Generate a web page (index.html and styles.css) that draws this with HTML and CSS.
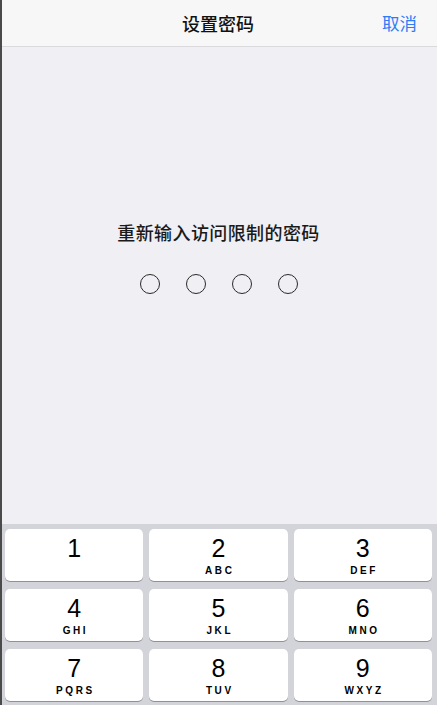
FILE: index.html
```html
<!DOCTYPE html>
<html>
<head>
<meta charset="utf-8">
<link rel="stylesheet" href="styles.css">
</head>
<body>
<div class="screen">
  <header class="navbar">
    <div class="title">设置密码</div>
    <div class="cancel">取消</div>
  </header>
  <main class="content">
    <div class="prompt">重新输入访问限制的密码</div>
    <div class="dots">
      <span class="dot"></span><span class="dot"></span><span class="dot"></span><span class="dot"></span>
    </div>
  </main>
  <section class="keyboard">
    <div class="key"><span class="num">1</span><span class="letters"></span></div>
    <div class="key"><span class="num">2</span><span class="letters">ABC</span></div>
    <div class="key"><span class="num">3</span><span class="letters">DEF</span></div>
    <div class="key"><span class="num">4</span><span class="letters">GHI</span></div>
    <div class="key"><span class="num">5</span><span class="letters">JKL</span></div>
    <div class="key"><span class="num">6</span><span class="letters">MNO</span></div>
    <div class="key"><span class="num">7</span><span class="letters">PQRS</span></div>
    <div class="key"><span class="num">8</span><span class="letters">TUV</span></div>
    <div class="key"><span class="num">9</span><span class="letters">WXYZ</span></div>
  </section>
</div>
</body>
</html>
```
FILE: styles.css
```css
html, body {
  margin: 0;
  padding: 0;
}
body {
  width: 437px;
  height: 705px;
  overflow: hidden;
  font-family: "Noto Sans CJK SC", "Liberation Sans", sans-serif;
  background: #efeff4;
}
.screen {
  box-sizing: border-box;
  width: 437px;
  height: 705px;
  border-left: 2px solid #4a4a4a;
  display: flex;
  flex-direction: column;
  background: #efeff4;
}
.navbar {
  box-sizing: border-box;
  height: 47px;
  flex: none;
  background: #f7f7f8;
  border-bottom: 1px solid #d9d9de;
  position: relative;
  display: flex;
  align-items: center;
  justify-content: center;
}
.title {
  font-size: 18px;
  font-weight: 500;
  color: #111;
  line-height: 24px;
  margin-top: -1px;
  margin-right: 3px;
}
.cancel {
  position: absolute;
  right: 20px;
  top: 11px;
  font-size: 17.5px;
  line-height: 24px;
  color: #2f7df6;
}
.content {
  flex: 1;
  display: flex;
  flex-direction: column;
  align-items: center;
  padding-top: 173px;
  padding-right: 2px;
}
.prompt {
  font-size: 18px;
  line-height: 24px;
  font-weight: 500;
  color: #1a1a1a;
  letter-spacing: 0.4px;
}
.dots {
  display: flex;
  gap: 26px;
  margin-top: 30px;
}
.dot {
  box-sizing: border-box;
  width: 20px;
  height: 20px;
  border: 1.5px solid #2a2a2a;
  border-radius: 50%;
}
.keyboard {
  flex: none;
  box-sizing: border-box;
  height: 181px;
  background: #d2d4da;
  padding: 5px 5px 0 3px;
  display: grid;
  grid-template-columns: repeat(3, 1fr);
  grid-template-rows: repeat(3, 52px);
  column-gap: 6px;
  row-gap: 8px;
}
.key {
  background: #fff;
  border-radius: 5px;
  box-shadow: 0 1px 0 #909196;
  display: flex;
  flex-direction: column;
  align-items: center;
  font-family: "Liberation Sans", Arial, sans-serif;
  color: #000;
}
.num {
  font-size: 25px;
  line-height: 28px;
  margin-top: 5px;
}
.letters {
  font-size: 10px;
  font-weight: bold;
  letter-spacing: 2.6px;
  margin-right: -2.6px;
  line-height: 12px;
  margin-top: 3px;
}
```
